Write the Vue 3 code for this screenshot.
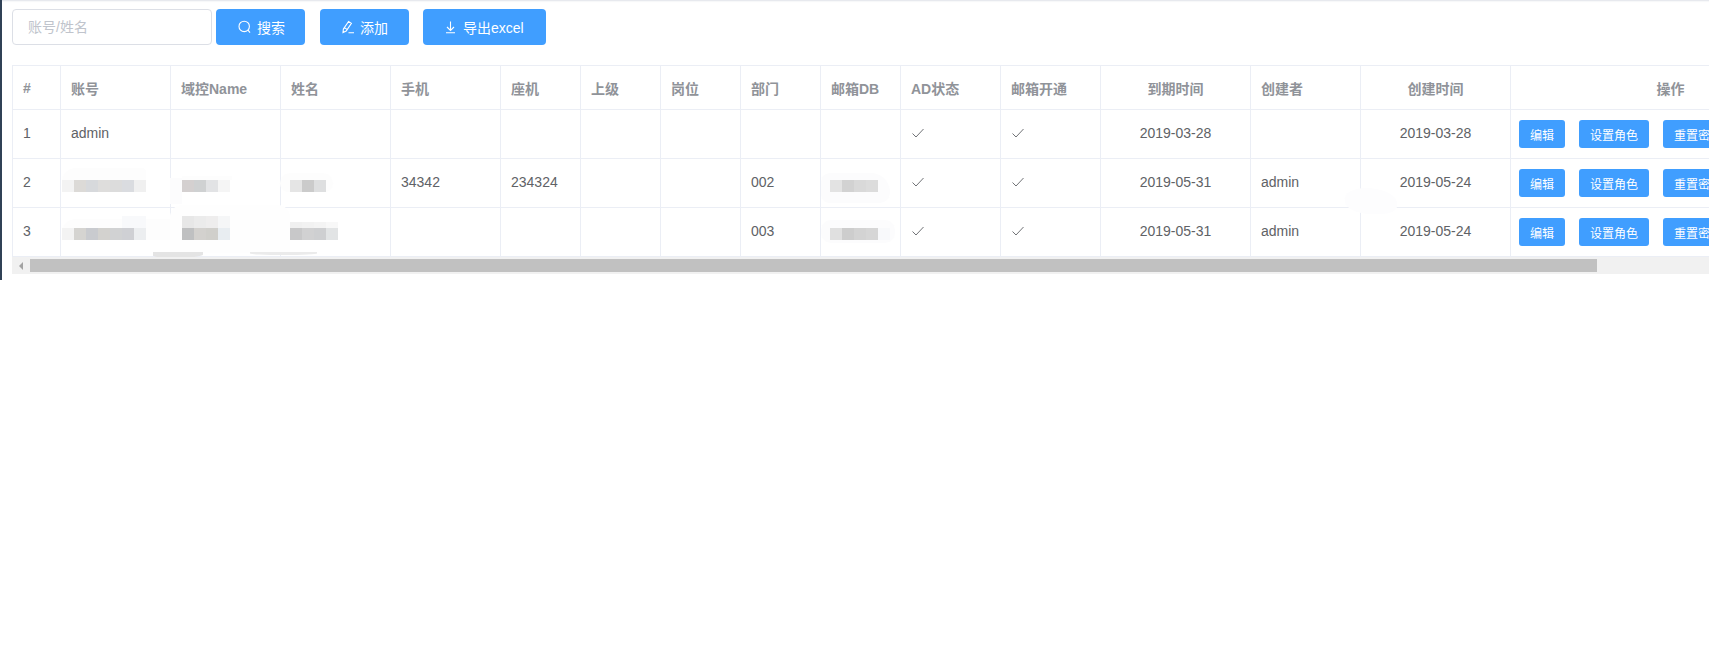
<template>
  <div class="page">
    <div class="toolbar">
      <input class="search-input" placeholder="账号/姓名" />
      <button class="btn first">
        <svg class="ico" viewBox="0 0 14 14"><circle cx="8.2" cy="6.4" r="5.2" /><path d="M12 10.2l2 2.4" /></svg>
        <span>搜索</span>
      </button>
      <button class="btn">
        <svg class="ico" viewBox="0 0 14 14"><path d="M3 12.6L3.4 9 8.6 1.4l2.8 1.9-5.2 7.7-3.2 1.6zM4.4 7.6l2.6 1.8M8.5 12.8H14" /></svg>
        <span>添加</span>
      </button>
      <button class="btn wide">
        <svg class="ico" viewBox="0 0 14 14"><path d="M7.5 1.5v8.6M4 7l3.5 3.4L11 7M3 12.8h9" /></svg>
        <span>导出excel</span>
      </button>
    </div>

    <div class="table-wrap">
      <table class="grid">
        <colgroup>
          <col v-for="c in columns" :key="c.label" :style="{ width: c.width + 'px' }" />
        </colgroup>
        <thead>
          <tr>
            <th v-for="c in columns" :key="c.label" :class="{ center: c.center }">{{ c.label }}</th>
          </tr>
        </thead>
        <tbody>
          <tr v-for="row in rows" :key="row.id">
            <td>{{ row.id }}</td>
            <td>{{ row.account }}</td>
            <td></td>
            <td></td>
            <td>{{ row.mobile }}</td>
            <td>{{ row.phone }}</td>
            <td></td>
            <td></td>
            <td>{{ row.dept }}</td>
            <td></td>
            <td><svg class="check" viewBox="0 0 14 14"><path d="M1.5 7.5l3.5 3.5 7.5-8" /></svg></td>
            <td><svg class="check" viewBox="0 0 14 14"><path d="M1.5 7.5l3.5 3.5 7.5-8" /></svg></td>
            <td class="center">{{ row.expire }}</td>
            <td>{{ row.creator }}</td>
            <td class="center">{{ row.created }}</td>
            <td class="ops">
              <button class="mini">编辑</button>
              <button class="mini">设置角色</button>
              <button class="mini">重置密码</button>
            </td>
          </tr>
        </tbody>
      </table>

      <!-- redacted areas from the screenshot -->
      <div v-for="(s, i) in smudges" :key="'s' + i" class="patch" :style="patchStyle(s)"></div>
      <div v-for="(b, i) in mosaic" :key="'m' + i" class="patch" :style="patchStyle(b)"></div>
    </div>

    <div class="scrollbar">
      <div class="arrow"></div>
      <div class="thumb"></div>
    </div>
  </div>
</template>

<script setup>
const columns = [
  { label: '#', width: 48 },
  { label: '账号', width: 110 },
  { label: '域控Name', width: 110 },
  { label: '姓名', width: 110 },
  { label: '手机', width: 110 },
  { label: '座机', width: 80 },
  { label: '上级', width: 80 },
  { label: '岗位', width: 80 },
  { label: '部门', width: 80 },
  { label: '邮箱DB', width: 80 },
  { label: 'AD状态', width: 100 },
  { label: '邮箱开通', width: 100 },
  { label: '到期时间', width: 150, center: true },
  { label: '创建者', width: 110 },
  { label: '创建时间', width: 150, center: true },
  { label: '操作', width: 320, center: true }
]

const rows = [
  { id: 1, account: 'admin', mobile: '', phone: '', dept: '', expire: '2019-03-28', creator: '', created: '2019-03-28' },
  { id: 2, account: '', mobile: '34342', phone: '234324', dept: '002', expire: '2019-05-31', creator: 'admin', created: '2019-05-24' },
  { id: 3, account: '', mobile: '', phone: '', dept: '003', expire: '2019-05-31', creator: 'admin', created: '2019-05-24' }
]

// page coordinates: x, y, w, h, colour, radius
const smudges = [
  [62, 168, 84, 24, '#fdfdfd', '14px 4px 0 8px'],
  [170, 178, 12, 26, '#fcfcfd', '0'],
  [182, 176, 50, 4, '#fdfdfd', '0'],
  [280, 173, 53, 19, '#fdfdfd', '12px 12px 10px 10px'],
  [62, 219, 108, 21, '#fdfdfd', '14px 0 0 6px'],
  [122, 216, 24, 12, '#f8f9fb', '0'],
  [170, 205, 120, 48, '#fefefe', '12px 12px 0 0'],
  [153, 252, 50, 6, '#e4e4e4', '0 0 60% 40%'],
  [250, 252, 67, 3, '#ebebeb', '0 0 50% 50%'],
  [821, 173, 69, 30, '#fcfcfd', '10px 22px 12px 10px'],
  [821, 220, 74, 23, '#fcfcfd', '10px'],
  [1345, 188, 52, 26, '#fdfdfe', '40% 60% 30% 50%']
]

function strip(x, y, h, colors) {
  return colors.map((c, i) => [x + i * 12, y, 12, h, c, '0'])
}

const mosaic = [
  ...strip(62, 180, 12, ['#f3f3f3', '#dcdad7', '#d7d9dc', '#dedddc', '#dcdcdc', '#dadce0', '#f0f0f0']),
  ...strip(182, 180, 12, ['#d4d0d0', '#cfd1d2', '#e2e3e5', '#f5f5f5']),
  ...strip(290, 180, 12, ['#e5e5e5', '#cbcbcb', '#dedfe0']),
  ...strip(62, 228, 12, ['#f3f3f3', '#d5d4d1', '#c9cbcf', '#d3d2cf', '#d1d2d3', '#cfd0d4', '#eceef0']),
  ...strip(182, 216, 12, ['#e7e7e7', '#ebebeb', '#eeeded', '#f5f6f7']),
  ...strip(182, 228, 12, ['#bfc0c1', '#d3d1ce', '#d0cfcb', '#e8edf1']),
  ...strip(290, 222, 6, ['#f0f0f0', '#f2f2f2', '#f4f4f4', '#f8f8f8']),
  ...strip(290, 228, 12, ['#c8c8c9', '#d1d1d2', '#cecfd1', '#e2e4e5']),
  ...strip(830, 180, 12, ['#e3e3e3', '#d2d2d2', '#d9d9d9', '#dcdcdc']),
  ...strip(830, 228, 12, ['#e0e0e0', '#cdcdcd', '#d3d3d3', '#d6d6d6', '#f8f9fb'])
]

// .table-wrap's padding box starts at 13,66 on the page
function patchStyle([x, y, w, h, color, radius]) {
  return {
    left: x - 13 + 'px',
    top: y - 66 + 'px',
    width: w + 'px',
    height: h + 'px',
    background: color,
    borderRadius: radius
  }
}
</script>

<style scoped>
.page {
  width: 1707px;
  height: 648px;
  margin-left: 2px;
  overflow: hidden;
  font-family: "Liberation Sans", "Noto Sans CJK SC", sans-serif;
  font-size: 14px;
  color: #606266;
  background: #fff;
}
.toolbar { display: flex; align-items: center; height: 36px; padding: 9px 0 0 10px; box-shadow: inset 0 3px 2px -2px #dfe2e8; }
.search-input {
  width: 200px;
  height: 36px;
  box-sizing: border-box;
  padding: 0 15px;
  border: 1px solid #dcdfe6;
  border-radius: 4px;
  font: inherit;
  outline: none;
}
.search-input::placeholder { color: #c0c4cc; }
.btn {
  height: 36px;
  margin-left: 15px;
  padding: 0 21px 0 20px;
  display: flex;
  align-items: center;
  gap: 6px;
  border: 0;
  border-radius: 4px;
  background: #409eff;
  color: #fff;
  font: inherit;
}
.btn.first { margin-left: 4px; gap: 7px; padding-right: 20px; }
.btn.wide { margin-left: 14px; padding-right: 22px; }
.ico { width: 14px; height: 14px; flex: none; overflow: visible; fill: none; stroke: #fff; stroke-width: 1.1; }

.table-wrap { position: relative; margin: 20px 0 0 10px; overflow: hidden; border-top: 1px solid #ebeef5; border-left: 1px solid #ebeef5; }
.grid { table-layout: fixed; width: 1818px; border-collapse: separate; border-spacing: 0; }
.grid th, .grid td {
  box-sizing: border-box;
  padding: 0 10px;
  text-align: left;
  border-right: 1px solid #ebeef5;
  border-bottom: 1px solid #ebeef5;
  white-space: nowrap;
  overflow: hidden;
}
.grid th { height: 44px; color: #909399; font-weight: 700; }
.grid td { height: 49px; padding-bottom: 2px; }
.grid .center { text-align: center; }
.check { width: 14px; height: 14px; display: block; fill: none; stroke: #606266; stroke-width: 0.9; }
.grid .ops { padding: 0 0 0 8px; font-size: 0; }
.mini {
  width: auto;
  height: 28px;
  padding: 0 11px;
  margin-right: 14px;
  border: 0;
  border-radius: 3px;
  background: #409eff;
  color: #fff;
  font-family: inherit;
  font-size: 12px;
  vertical-align: middle;
}

.patch { position: absolute; }

.scrollbar { display: flex; align-items: center; height: 17px; margin-left: 10px; background: #f1f1f1; }
.arrow { width: 18px; height: 17px; flex: none; position: relative; }
.arrow::before {
  content: "";
  position: absolute;
  left: 7px;
  top: 5px;
  border: 4px solid transparent;
  border-left-width: 0;
  border-right: 4px solid #a3a3a3;
}
.thumb { width: 1567px; height: 13px; background: #c1c1c1; }
</style>

<style>
html, body { margin: 0; overflow: hidden; background: #fff; }
body::before {
  content: "";
  position: fixed;
  left: 0;
  top: 0;
  width: 2px;
  height: 280px;
  background: #304156;
}
</style>
